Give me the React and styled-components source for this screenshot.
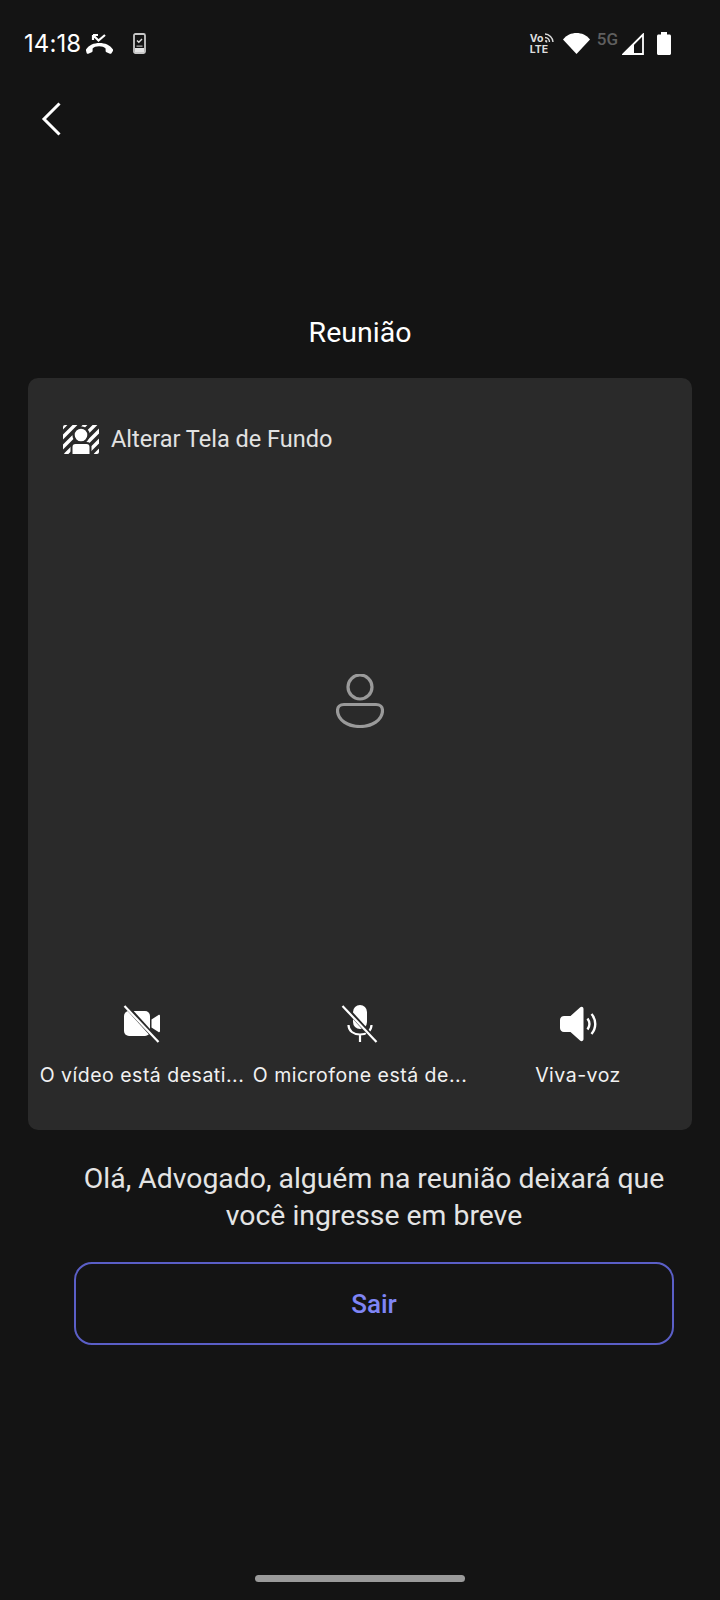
import React from 'react';
import styled, { createGlobalStyle } from 'styled-components';

const GlobalStyle = createGlobalStyle`
  html, body {
    margin: 0;
    padding: 0;
    background: #141414;
  }
  * {
    box-sizing: border-box;
  }
`;

const Page = styled.div`
  width: 720px;
  height: 1600px;
  background: #141414;
  display: flex;
  flex-direction: column;
  font-family: Roboto, 'Liberation Sans', sans-serif;
  color: #fff;
`;

const StatusBar = styled.div`
  height: 87px;
  padding: 0 49px 0 24px;
  display: flex;
  align-items: center;
  justify-content: space-between;
`;

const StatusGroup = styled.div`
  display: flex;
  align-items: center;
`;

const StatusSlot = styled.span`
  display: flex;
  margin-left: ${props => props.$left || 0}px;
`;

const Clock = styled.span`
  font-family: Inter, 'Liberation Sans', sans-serif;
  font-size: 24px;
  letter-spacing: 0.1px;
`;

const VoLteBox = styled.div`
  position: relative;
  width: 24px;
  height: 21px;
  font-family: Inter, sans-serif;
  font-size: 10.5px;
  line-height: 11px;
  font-weight: 700;
  color: #ddd;
`;

const VoLteWaves = styled.svg`
  position: absolute;
  top: 0;
  right: 0;
`;

const FiveG = styled.span`
  font-family: Roboto, sans-serif;
  font-size: 17px;
  font-weight: 500;
  line-height: 17px;
  color: #5f5f5f;
  margin: 0 4px 9px 7px;
`;

const BackRow = styled.div`
  height: 60px;
  padding: 4px 0 0 41px;
  display: flex;
  align-items: center;
`;

const Title = styled.h1`
  margin: 165px 0 0;
  height: 66px;
  font-size: 28.5px;
  line-height: 41px;
  font-weight: 400;
  text-align: center;
`;

const Card = styled.section`
  margin: 0 28px;
  height: 752px;
  background: #2a2a2a;
  border-radius: 10px;
  display: flex;
  flex-direction: column;
`;

const BackgroundRow = styled.div`
  padding: 45px 0 0 35px;
  display: flex;
  align-items: center;
  gap: 12px;
  font-size: 23.5px;
  line-height: 32px;
  color: #e2e2e2;
`;

const Preview = styled.div`
  flex: 1;
  display: flex;
  align-items: center;
  justify-content: center;
  padding-bottom: 58px;
`;

const Controls = styled.div`
  display: grid;
  grid-template-columns: repeat(3, 216px);
  justify-content: center;
  column-gap: 2px;
  padding-bottom: 41px;
`;

const Control = styled.div`
  min-width: 0;
  display: flex;
  flex-direction: column;
  align-items: center;
  gap: 18px;
`;

const ControlLabel = styled.span`
  font-family: Inter, sans-serif;
  font-size: 19.5px;
  line-height: 28px;
  letter-spacing: 0.5px;
  color: #f1f1f1;
  white-space: nowrap;
`;

const Waiting = styled.div`
  margin: 30px 46px 0 74px;
  font-size: 28.35px;
  line-height: 37px;
  text-align: center;
  color: #e4e4e4;
`;

const LeaveButton = styled.button`
  margin: 28px 46px 0 74px;
  height: 83px;
  background: transparent;
  border: 2px solid #5b5fc7;
  border-radius: 18px;
  font-family: Roboto, sans-serif;
  font-size: 26px;
  font-weight: 500;
  color: #7f85f5;
`;

const HomeIndicator = styled.div`
  width: 210px;
  height: 7px;
  margin: auto auto 18px;
  border-radius: 4px;
  background: #9a9a9a;
`;

const CallTickIcon = () => (
  <svg width="27" height="20" viewBox="0 0 27 20" fill="#fff">
    <path d="M0 15.500C3 11 8 9 13.500 9S24 11 27 15.500c.3.600.2 1-.1 1.500l-1.400 2.200c-.4.600-1 .8-1.600.5l-3.400-1.400c-.6-.3-.9-.8-.9-1.400v-2.500c-1.500-1.500-3.700-2.200-6.500-2.200s-5 .7-6.500 2.200v2.500c0 .6-.3 1.100-.9 1.400l-3.400 1.400c-.6.300-1.200.1-1.600-.5L.1 17c-.3-.5-.4-1-.1-1.500z" />
    <path d="M7 1l5.500 5.500L19 1M7 1h5M7 1v5" stroke="#fff" strokeWidth="2.200" fill="none" />
  </svg>
);

const PhoneCheckIcon = () => (
  <svg width="13" height="21" viewBox="0 0 13 21" fill="none">
    <rect x="1" y="1" width="11" height="19" rx="1.500" stroke="#c8c8c8" strokeWidth="1.800" />
    <rect x="2" y="15" width="9" height="4" fill="#e4e4e4" />
    <rect x="3.500" y="12.500" width="6" height="1.300" fill="#aaa" />
    <path d="M4 7.500l1.800 1.800 3.200-3.300" stroke="#ddd" strokeWidth="1.400" />
  </svg>
);

const WifiIcon = () => (
  <svg width="27" height="21" viewBox="0 0 27 21" fill="#fff">
    <path d="M13.500 21L0 6.500C3.500 2 8.500 0 13.500 0S23.500 2 27 6.500z" />
  </svg>
);

const SignalIcon = () => (
  <svg width="22" height="22" viewBox="0 0 22 22" fill="none">
    <path d="M1.500 21L21 1.500V21z" stroke="#fff" strokeWidth="1.800" />
    <path d="M1 21.500l11-11v11z" fill="#fff" />
  </svg>
);

const BatteryIcon = () => (
  <svg width="14" height="23" viewBox="0 0 14 23" fill="#fff">
    <path d="M4 2.500V0h6v2.500h2.500c.8 0 1.500.7 1.500 1.500v17.500c0 .8-.7 1.500-1.500 1.500h-11C.7 23 0 22.300 0 21.500V4c0-.8.7-1.500 1.500-1.500z" />
  </svg>
);

const ChevronIcon = () => (
  <svg width="20" height="34" viewBox="0 0 20 34" fill="none">
    <path d="M18.500 1.500L3 17l15.500 15.500" stroke="#fff" strokeWidth="3" />
  </svg>
);

const BackgroundIcon = () => (
  <svg width="36" height="29" viewBox="0 0 36 29">
    <defs>
      <clipPath id="wall">
        <rect width="36" height="29" rx="2" />
      </clipPath>
    </defs>
    <g clipPath="url(#wall)" stroke="#fff" strokeWidth="3.400">
      <path d="M-8 10L10-8M-8 20L20-8M-8 30L30-8M2 30L40-8M12 30L44-2M22 30L44 8M32 30L44 18" />
    </g>
    <circle cx="18" cy="10" r="7.500" fill="#fff" stroke="#2a2a2a" strokeWidth="2.400" />
    <path d="M8.500 30v-8c0-2.500 1.500-4 4-4h11c2.500 0 4 1.500 4 4v8z" fill="#fff" stroke="#2a2a2a" strokeWidth="2" />
  </svg>
);

const PersonIcon = () => (
  <svg width="48" height="54" viewBox="0 0 48 54" fill="none" stroke="#9a9a9a" strokeWidth="3.200">
    <circle cx="24" cy="13" r="12" />
    <path d="M8 30.500h32c4 0 6.500 2.500 6.500 6C46.500 46 36 52.500 24 52.500S1.500 46 1.500 36.500c0-3.500 2.500-6 6.500-6z" />
  </svg>
);

const VideoOffIcon = () => (
  <svg width="38" height="38" viewBox="0 0 38 38">
    <rect x="1" y="6" width="26" height="25" rx="5" fill="#fff" />
    <path d="M28.500 14.500l7-4.500c.8-.5 1.500 0 1.500 1v15c0 1-.7 1.500-1.500 1l-7-4.500z" fill="#fff" />
    <path d="M4 2l30 33" stroke="#2a2a2a" strokeWidth="4.500" />
    <path d="M1.500 1l34 36" stroke="#fff" strokeWidth="2.200" />
  </svg>
);

const MicOffIcon = () => (
  <svg width="38" height="38" viewBox="0 0 38 38" fill="none">
    <rect x="12" y="0" width="14" height="24" rx="7" fill="#fff" />
    <path d="M7.500 20c0 6 5 9.500 11.500 9.500S30.500 26 30.500 20M19 30v7" stroke="#fff" strokeWidth="2.200" />
    <path d="M4 2l30 33" stroke="#2a2a2a" strokeWidth="4.500" />
    <path d="M1.500 1l34 36" stroke="#fff" strokeWidth="2.200" />
  </svg>
);

const SpeakerIcon = () => (
  <svg width="38" height="38" viewBox="0 0 38 38" fill="none">
    <path d="M5 11h6.500L21 2.500c1.500-1.300 3.500-.6 3.500 1.500v30c0 2-2 2.800-3.500 1.500L11.500 27H5c-2.500 0-4-2-4-4v-8c0-2 1.500-4 4-4z" fill="#fff" />
    <path d="M28.500 13.500c2.500 3.500 2.500 7.500 0 11M32.500 9c5 6 5 14 0 20" stroke="#fff" strokeWidth="2.400" />
  </svg>
);

const controls = [
  { icon: <VideoOffIcon />, label: 'O vídeo está desati...' },
  { icon: <MicOffIcon />, label: 'O microfone está de...' },
  { icon: <SpeakerIcon />, label: 'Viva-voz' },
];

const App = () => (
  <Page>
    <GlobalStyle />
    <StatusBar>
      <StatusGroup>
        <Clock>14:18</Clock>
        <StatusSlot $left={5}>
          <CallTickIcon />
        </StatusSlot>
        <StatusSlot $left={20}>
          <PhoneCheckIcon />
        </StatusSlot>
      </StatusGroup>
      <StatusGroup>
        <VoLteBox>
          Vo
          <br />
          LTE
          <VoLteWaves width="10" height="10" viewBox="0 0 10 10" fill="none" stroke="#ddd" strokeWidth="1.400">
            <path d="M1 1c4 0 8 4 8 8M1 4.500c2.500 0 4.500 2 4.500 4.500M1 8h1.500v1.500" />
          </VoLteWaves>
        </VoLteBox>
        <StatusSlot $left={9}>
          <WifiIcon />
        </StatusSlot>
        <FiveG>5G</FiveG>
        <SignalIcon />
        <StatusSlot $left={13}>
          <BatteryIcon />
        </StatusSlot>
      </StatusGroup>
    </StatusBar>
    <BackRow>
      <ChevronIcon />
    </BackRow>
    <Title>Reunião</Title>
    <Card>
      <BackgroundRow>
        <BackgroundIcon />
        Alterar Tela de Fundo
      </BackgroundRow>
      <Preview>
        <PersonIcon />
      </Preview>
      <Controls>
        {controls.map(control => (
          <Control key={control.label}>
            {control.icon}
            <ControlLabel>{control.label}</ControlLabel>
          </Control>
        ))}
      </Controls>
    </Card>
    <Waiting>
      Olá, Advogado, alguém na reunião deixará que
      <br />
      você ingresse em breve
    </Waiting>
    <LeaveButton>Sair</LeaveButton>
    <HomeIndicator />
  </Page>
);

export default App;
